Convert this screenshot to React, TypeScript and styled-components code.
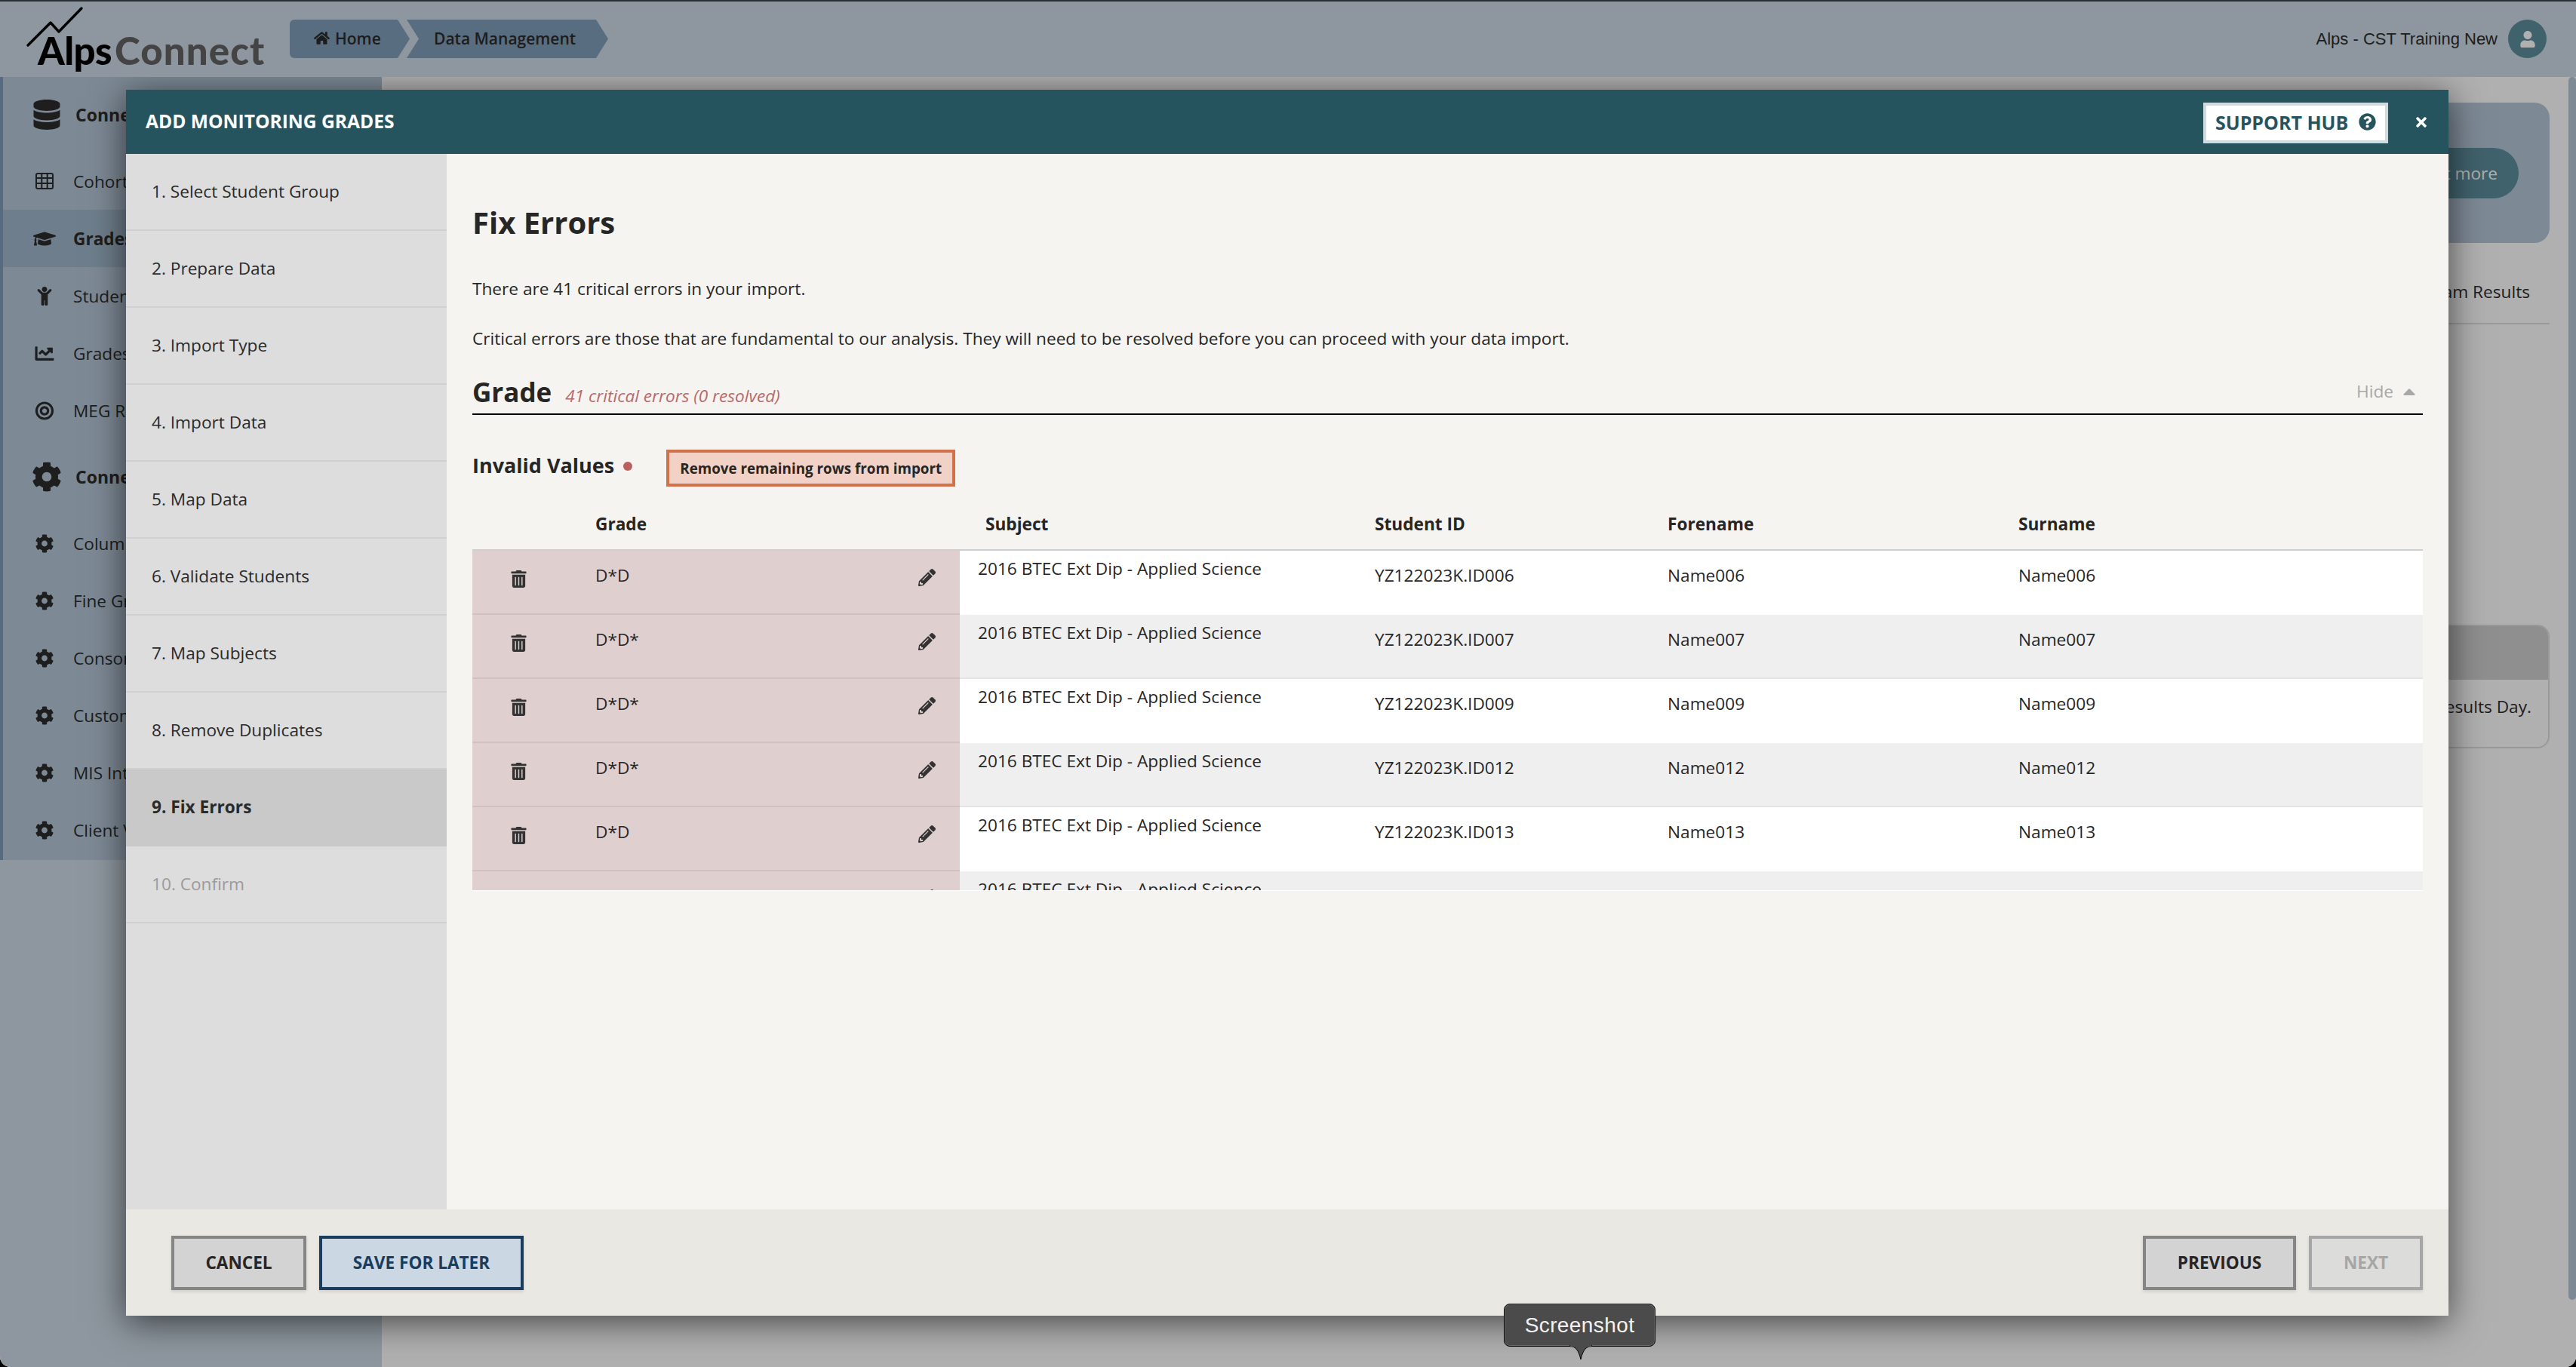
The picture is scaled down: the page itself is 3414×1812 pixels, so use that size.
import React from "react";
import styled, { createGlobalStyle } from "styled-components";
import {
  FaHome, FaUser, FaDatabase, FaGraduationCap, FaChild, FaChartLine, FaBullseye, FaCog,
  FaQuestionCircle, FaTimes, FaTrashAlt, FaPencilAlt, FaCaretUp,
} from "react-icons/fa";

const Global = createGlobalStyle`
  html, body { margin: 0; padding: 0; background: #000; }
  body { font-family: "Open Sans", "Liberation Sans", sans-serif; color: #2c2c2c; overflow: hidden; }
  * { box-sizing: border-box; }
`;

const Page = styled.div`
  position: relative; width: 3414px; height: 1812px; overflow: hidden;
  display: flex; flex-direction: column;
  border-top: 2px solid #2a2f33; border-radius: 0 0 14px 14px;
  background: #fff;
`;
const TopBar = styled.header`
  height: 100px; flex: none; background: #cedbe6;
  display: flex; align-items: flex-start; padding-right: 39px;
`;
const Logo = styled.div`
  position: relative; width: 384px; height: 100px; flex: none; padding: 37px 0 0 50px;
  font-family: Lato, "Open Sans", sans-serif; font-weight: 900; font-size: 51px; line-height: 56px;
  letter-spacing: -0.6px; white-space: nowrap;
`;
const LogoLine = styled.svg`
  position: absolute; left: 0; top: -2px;
`;
const LogoDark = styled.span` color: #000; margin-right: 4px; `;
const LogoGrey = styled.span` color: #636363; letter-spacing: 1.1px; `;
const Crumbs = styled.nav`
  display: flex; margin-top: 24px; height: 51px;
`;
const Crumb = styled.div<{ $first?: boolean; $w: number }>`
  width: ${(p) => p.$w}px; height: 51px; display: flex; align-items: center; gap: 7px;
  padding: 0 0 2px ${(p) => (p.$first ? 32 : 36)}px; margin-right: -4px;
  background: #829eba; font-size: 21px; font-weight: 600; color: #2a2a2a;
  border-radius: ${(p) => (p.$first ? "6px 0 0 6px" : "0")};
  clip-path: ${(p) => (p.$first
    ? "polygon(0 0, calc(100% - 16px) 0, 100% 50%, calc(100% - 16px) 100%, 0 100%)"
    : "polygon(0 0, calc(100% - 16px) 0, 100% 50%, calc(100% - 16px) 100%, 0 100%, 16px 50%)")};
`;
const Account = styled.div`
  margin-left: auto; margin-top: 24px; display: flex; align-items: center; gap: 14px;
  font-family: "Liberation Sans", Arial, sans-serif; font-size: 22px; color: #2c2c2c; height: 51px;
`;
const Avatar = styled.div`
  width: 51px; height: 51px; border-radius: 50%; background: #5e8e9d; color: #fff;
  display: flex; align-items: center; justify-content: center; font-size: 22px;
`;
const Body = styled.div` flex: 1; display: flex; min-height: 0; `;
const SideColumn = styled.div` width: 506px; flex: none; background: #cedbe6; `;
const Sidebar = styled.aside`
  height: 1038px; background: #b5c7d8; border-left: 4px solid #7d9bba; overflow: hidden;
`;
const SideHead = styled.div`
  height: 100px; display: flex; align-items: center; gap: 16px; padding-left: 36px;
  font-size: 23px; font-weight: 700; color: #2c2c2c; white-space: nowrap;
  svg { font-size: 40px; width: 44px; flex: none; }
`;
const SideItem = styled.div<{ $active?: boolean }>`
  height: 76px; display: flex; align-items: center; gap: 23px; padding-left: 40px;
  font-size: 22.65px; white-space: nowrap; color: #2c2c2c;
  font-weight: ${(p) => (p.$active ? 700 : 400)};
  background: ${(p) => (p.$active ? "#a1b7cb" : "transparent")};
  margin-left: ${(p) => (p.$active ? "-4px" : "0")};
  border-left: ${(p) => (p.$active ? "4px solid #46566a" : "none")};
  svg { width: 30px; font-size: 25px; flex: none; }
`;
const Main = styled.main`
  flex: 1; background: #fff; padding: 34px 35px 0 0; display: flex; flex-direction: column;
`;
const Promo = styled.div`
  height: 186px; border-radius: 20px; background: #b5c7d8;
  display: flex; align-items: center; justify-content: flex-end; padding-right: 41px;
`;
const PromoButton = styled.div`
  height: 67px; width: 300px; border-radius: 34px; background: #5e8e9d; color: #fff;
  display: flex; align-items: center; justify-content: flex-end; padding-right: 28px; font-size: 22.65px;
`;
const Tabs = styled.div`
  height: 108px; border-bottom: 2px solid #dfdfdf; display: flex; justify-content: flex-end;
  align-items: center; padding: 22px 26px 0 0; font-size: 22.65px; color: #2c2c2c;
`;
const Alert = styled.section`
  margin-top: 398px; height: 164px; border-radius: 16px; border: 2px solid #dedede; overflow: hidden;
`;
const AlertHead = styled.div` height: 71px; background: #cfcfcf; `;
const AlertText = styled.div`
  text-align: right; padding: 20px 22px 0 0; font-size: 22.65px; color: #2c2c2c;
`;
const ScrollThumb = styled.div`
  position: absolute; right: 0; top: 100px; width: 10px; height: 1621px;
  border-radius: 6px; background: #b5c7d8;
`;
const Backdrop = styled.div`
  position: absolute; inset: 0; background: rgba(0, 0, 0, 0.31);
`;
const ModalLayer = styled.div`
  position: absolute; left: 0; right: 0; top: 100px; bottom: 0; overflow: hidden;
`;
const Modal = styled.div`
  position: absolute; left: 167px; top: 17px; width: 3078px; height: 1625px;
  display: flex; flex-direction: column; background: #f5f4f0;
  box-shadow: 0 8px 44px rgba(0, 0, 0, 0.62);
`;
const ModalHead = styled.div`
  height: 85px; flex: none; background: #25545e; color: #fff; display: flex; align-items: center;
  padding: 0 26px;
`;
const ModalTitle = styled.h2`
  margin: 0 0 2px; font-size: 24.6px; font-weight: 700; line-height: 34px; flex: 1;
`;
const SupportHub = styled.button`
  width: 245px; height: 54px; margin: 2px 0 0; border: 4px solid #cfdcdf; background: #fff; color: #25545e;
  display: flex; align-items: center; gap: 14px; padding: 0 0 2px 12px;
  font-family: inherit; font-size: 25px; font-weight: 700; white-space: nowrap;
  svg { font-size: 23px; flex: none; }
`;
const CloseButton = styled.button`
  width: 44px; height: 44px; margin-left: 22px; margin-right: -12px; border: none; background: none; color: #fff;
  padding: 0; display: flex; align-items: center; justify-content: center; font-size: 20px;
`;
const ModalMiddle = styled.div` flex: 1; display: flex; min-height: 0; `;
const Steps = styled.ol`
  width: 425px; flex: none; margin: 0; padding: 0; list-style: none; background: #dddddd;
`;
const Step = styled.li<{ $active?: boolean; $off?: boolean }>`
  height: 102px; padding: 0 0 2px 34px; display: flex; align-items: center; font-size: 22.65px;
  border-bottom: 2px solid ${(p) => (p.$active ? "#c9c9c9" : "#d0d0d0")};
  background: ${(p) => (p.$active ? "#c9c9c9" : "transparent")};
  font-weight: ${(p) => (p.$active ? 700 : 400)};
  color: ${(p) => (p.$off ? "#9b9b9b" : "#2a2a2a")};
`;
const Content = styled.div`
  flex: 1; min-width: 0; padding: 64px 34px 0 34px; background: #f5f4f0;
`;
const Title = styled.h1`
  margin: 0; font-size: 40px; line-height: 54px; font-weight: 700; color: #262626;
`;
const Para = styled.p<{ $mt: number }>`
  margin: ${(p) => p.$mt}px 0 0; font-size: 22.65px; line-height: 30px; color: #262626;
`;
const SectionHead = styled.div`
  margin-top: 34px; height: 52px; border-bottom: 2px solid #000; display: flex; align-items: baseline;
`;
const SectionName = styled.h3`
  margin: 0; font-size: 35px; line-height: 44px; font-weight: 700; color: #262626;
`;
const SectionNote = styled.em`
  margin-left: 18px; font-size: 22.65px; color: #b86a6a;
`;
const HideToggle = styled.div`
  align-self: flex-start; margin: 5px 0 0 auto; display: flex; align-items: center; gap: 8px; padding-right: 5px;
  font-size: 22.65px; color: #a8a8a8; svg { font-size: 26px; }
`;
const ErrorBar = styled.div`
  margin-top: 46px; height: 49px; display: flex; align-items: center;
`;
const ErrorName = styled.h4`
  margin: -7px 0 0; font-size: 27px; font-weight: 700; color: #262626; line-height: 36px;
`;
const Dot = styled.span`
  width: 12px; height: 12px; border-radius: 50%; background: #b96060; margin: -5px 0 0 12px; flex: none;
`;
const RemoveButton = styled.button`
  margin-left: 45px; width: 383px; height: 49px; border: 4px solid #d4714d; background: #f2d2c7; padding: 0;
  font-family: inherit; font-size: 18.8px; font-weight: 700; color: #262626; white-space: nowrap;
`;
const columns = "163px 483px 550px 388px 465px 1fr";
const TableHead = styled.div`
  display: grid; grid-template-columns: ${columns}; height: 85px; padding-top: 35px; line-height: 30px;
  border-bottom: 2px solid #cfcfcf; font-size: 22.65px; font-weight: 700; color: #262626;
`;
const HeadCell = styled.div<{ $indent?: number }>`
  padding-left: ${(p) => p.$indent ?? 0}px;
`;
const Rows = styled.div`
  height: 451px; overflow: hidden; border-bottom: 1px solid #fff;
`;
const Row = styled.div<{ $even: boolean }>`
  display: grid; grid-template-columns: ${columns}; height: 85px; font-size: 22.65px; line-height: 30px;
  color: #262626; background: ${(p) => (p.$even ? "#efefef" : "#fff")};
  border-bottom: 2px solid ${(p) => (p.$even ? "#e3e3e3" : "#fff")};
`;
const BadCell = styled.div`
  background: #e0cfcf; margin-bottom: -2px; border-bottom: 2px solid #d4bfc1;
`;
const TrashCell = styled(BadCell)`
  display: flex; justify-content: center; padding: 26px 40px 0 0; font-size: 23px; color: #333;
  svg { display: block; }
`;
const GradeCell = styled(BadCell)`
  display: flex; justify-content: space-between; padding: 18px 32px 0 0;
`;
const PencilMark = styled.span` font-size: 23px; color: #333; margin-top: 5px; display: block; height: 24px; `;
const SubjectCell = styled.div` padding: 9px 0 0 24px; `;
const PlainCell = styled.div` padding-top: 18px; `;
const ModalFoot = styled.div`
  height: 141px; flex: none; background: #e9e8e3; display: flex; padding: 35px 34px 0 60px; gap: 17px;
`;
const FootButton = styled.button<{ $w: number; $tone?: "save" | "off"; $push?: boolean }>`
  width: ${(p) => p.$w}px; height: 72px; padding: 0 0 2px; font-family: inherit; font-size: 22.6px; font-weight: 700;
  margin-left: ${(p) => (p.$push ? "auto" : "0")};
  box-shadow: 0 2px 4px rgba(0,0,0,.12);
  border: 4px solid ${(p) => (p.$tone === "save" ? "#1a3d5f" : p.$tone === "off" ? "#a6a6a6" : "#858585")};
  background: ${(p) => (p.$tone === "save" ? "#cbd8e3" : p.$tone === "off" ? "#dcdcdb" : "#d3d3d3")};
  color: ${(p) => (p.$tone === "save" ? "#1a3d5f" : p.$tone === "off" ? "#a6a6a6" : "#262626")};
`;
const Tooltip = styled.div`
  position: absolute; left: 1993px; top: 1726px; width: 201px; height: 57px; border-radius: 8px;
  background: #4b4b4b; border: 1px solid #000; box-shadow: inset 0 0 0 1px #6a6a6a;
  color: #f2f2f2; font-family: "Liberation Sans", Arial, sans-serif; font-size: 28px; letter-spacing: 0.4px;
  display: flex; align-items: center; justify-content: center;
`;
const TooltipTip = styled.svg`
  position: absolute; left: 84px; top: 54px;
`;

const GridIcon = () => (
  <svg viewBox="0 0 24 22" height="22">
    <rect x="1" y="1" width="22" height="20" rx="2" fill="none" stroke="currentColor" strokeWidth="2" />
    <path d="M1 7 H23 M1 14 H23 M8.3 1 V21 M15.7 1 V21" fill="none" stroke="currentColor" strokeWidth="2" />
  </svg>
);

const steps = ["1. Select Student Group", "2. Prepare Data", "3. Import Type", "4. Import Data", "5. Map Data",
  "6. Validate Students", "7. Map Subjects", "8. Remove Duplicates", "9. Fix Errors", "10. Confirm"];

const rows = [
  ["D*D", "YZ122023K.ID006", "Name006"],
  ["D*D*", "YZ122023K.ID007", "Name007"],
  ["D*D*", "YZ122023K.ID009", "Name009"],
  ["D*D*", "YZ122023K.ID012", "Name012"],
  ["D*D", "YZ122023K.ID013", "Name013"],
  ["D*D", "YZ122023K.ID021", "Name021"],
];

export default function App() {
  return (
    <>
      <Global />
      <Page>
        <TopBar>
          <Logo>
            <LogoLine width="120" height="70" viewBox="0 0 120 70">
              <polyline points="37,60 67,30 78,42 108,11" fill="none" stroke="#000" strokeWidth="3.4" strokeLinecap="round" strokeLinejoin="round" />
            </LogoLine>
            <LogoDark>Alps</LogoDark><LogoGrey>Connect</LogoGrey>
          </Logo>
          <Crumbs>
            <Crumb $first $w={159}><FaHome /> Home</Crumb>
            <Crumb $w={267}>Data Management</Crumb>
          </Crumbs>
          <Account>Alps - CST Training New<Avatar><FaUser /></Avatar></Account>
        </TopBar>
        <Body>
          <SideColumn>
            <Sidebar>
              <SideHead><FaDatabase />Connect Data</SideHead>
              <SideItem><GridIcon />Cohort Data</SideItem>
              <SideItem $active><FaGraduationCap />Grades Data</SideItem>
              <SideItem><FaChild />Student Data</SideItem>
              <SideItem><FaChartLine />Grades Analysis</SideItem>
              <SideItem><FaBullseye />MEG Reports</SideItem>
              <SideHead><FaCog />Connect Settings</SideHead>
              <SideItem><FaCog />Column Mapping</SideItem>
              <SideItem><FaCog />Fine Grades</SideItem>
              <SideItem><FaCog />Consortium</SideItem>
              <SideItem><FaCog />Custom Groups</SideItem>
              <SideItem><FaCog />MIS Integration</SideItem>
              <SideItem><FaCog />Client Values</SideItem>
            </Sidebar>
          </SideColumn>
          <Main>
            <Promo><PromoButton>Find out more</PromoButton></Promo>
            <Tabs>Exam Results</Tabs>
            <Alert>
              <AlertHead />
              <AlertText>Results Day.</AlertText>
            </Alert>
          </Main>
        </Body>
        <ScrollThumb />
        <Backdrop />
        <ModalLayer>
          <Modal>
            <ModalHead>
              <ModalTitle>ADD MONITORING GRADES</ModalTitle>
              <SupportHub>SUPPORT HUB <FaQuestionCircle /></SupportHub>
              <CloseButton aria-label="Close"><FaTimes /></CloseButton>
            </ModalHead>
            <ModalMiddle>
              <Steps>
                {steps.map((s, i) => (
                  <Step key={s} $active={i === 8} $off={i === 9}>{s}</Step>
                ))}
              </Steps>
              <Content>
                <Title>Fix Errors</Title>
                <Para $mt={46}>There are 41 critical errors in your import.</Para>
                <Para $mt={36}>Critical errors are those that are fundamental to our analysis. They will need to be resolved before you can proceed with your data import.</Para>
                <SectionHead>
                  <SectionName>Grade</SectionName>
                  <SectionNote>41 critical errors (0 resolved)</SectionNote>
                  <HideToggle>Hide <FaCaretUp /></HideToggle>
                </SectionHead>
                <ErrorBar>
                  <ErrorName>Invalid Values</ErrorName>
                  <Dot />
                  <RemoveButton>Remove remaining rows from import</RemoveButton>
                </ErrorBar>
                <TableHead>
                  <HeadCell />
                  <HeadCell>Grade</HeadCell>
                  <HeadCell $indent={34}>Subject</HeadCell>
                  <HeadCell>Student ID</HeadCell>
                  <HeadCell>Forename</HeadCell>
                  <HeadCell>Surname</HeadCell>
                </TableHead>
                <Rows>
                  {rows.map(([grade, id, name], i) => (
                    <Row key={id} $even={i % 2 === 1}>
                      <TrashCell><FaTrashAlt /></TrashCell>
                      <GradeCell>{grade}<PencilMark><FaPencilAlt /></PencilMark></GradeCell>
                      <SubjectCell>2016 BTEC Ext Dip - Applied Science</SubjectCell>
                      <PlainCell>{id}</PlainCell>
                      <PlainCell>{name}</PlainCell>
                      <PlainCell>{name}</PlainCell>
                    </Row>
                  ))}
                </Rows>
              </Content>
            </ModalMiddle>
            <ModalFoot>
              <FootButton $w={179}>CANCEL</FootButton>
              <FootButton $w={271} $tone="save">SAVE FOR LATER</FootButton>
              <FootButton $w={203} $push>PREVIOUS</FootButton>
              <FootButton $w={151} $tone="off">NEXT</FootButton>
            </ModalFoot>
          </Modal>
        </ModalLayer>
        <Tooltip>
          Screenshot
          <TooltipTip width="34" height="20" viewBox="0 0 34 20">
            <path d="M2 1 H32 C24 2 20 6 17 19 C14 6 10 2 2 1 Z" fill="#4b4b4b" stroke="#000" strokeWidth="1" />
            <rect x="3" y="0" width="28" height="2.5" fill="#4b4b4b" />
          </TooltipTip>
        </Tooltip>
      </Page>
    </>
  );
}
